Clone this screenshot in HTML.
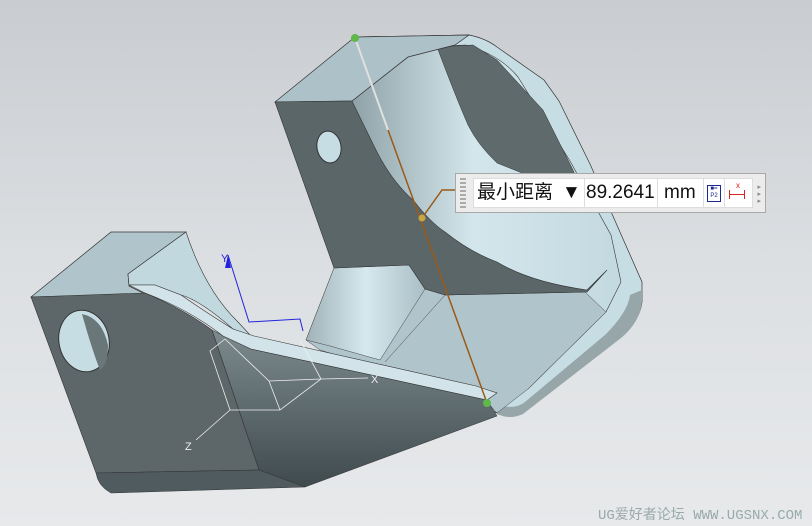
<!DOCTYPE html>
<html><head><meta charset="utf-8"><style>
html,body{margin:0;padding:0;width:812px;height:526px;overflow:hidden;background:linear-gradient(#c9ccd0,#dcdfe2 50%,#e7e9eb);font-family:"Liberation Sans","Noto Sans CJK SC",sans-serif}
svg{position:absolute;left:0;top:0}
#lab{position:absolute;left:455px;top:173px;width:311px;height:40px;background:#ececec;border:1px solid #a8a8a8;box-sizing:border-box}
#lab .in{position:absolute;left:17px;top:4px;width:280px;height:30px;background:#fff;border:1px solid #ddd;box-sizing:border-box;font-size:19px;line-height:28px;color:#111}
#lab .dots{position:absolute;left:4px;top:4px;width:6px;height:30px;background:repeating-linear-gradient(#aaa 0 2px,transparent 2px 4px)}
.wm{position:absolute;left:598px;top:504px;font-size:14px;color:#9aa;font-family:"Liberation Mono","Noto Sans CJK SC",monospace}
</style></head><body>
<svg width="812" height="526" viewBox="0 0 812 526">
<defs>
<linearGradient id="bowl" x1="0" y1="0" x2="1" y2="0"><stop offset="0" stop-color="#8fa2a8"/><stop offset=".45" stop-color="#d3e6ec"/><stop offset="1" stop-color="#c3d9e0"/></linearGradient>
<linearGradient id="bot" x1="0" y1="0" x2="0" y2="1"><stop offset="0" stop-color="#7d8b8e"/><stop offset="1" stop-color="#3f4a4d"/></linearGradient>
<linearGradient id="cyl" x1="0" y1="0" x2="1" y2="0"><stop offset="0" stop-color="#9fb2b8"/><stop offset=".5" stop-color="#d6e9ef"/><stop offset="1" stop-color="#a9bec5"/></linearGradient>
</defs>
<path d="M355,37 L469,35 Q485,38 497,47 L544,80 L559,101 L590,164 L642,282 L642,302 Q640,320 621,336 L523,413 Q510,418 497,413 L470,400 Z" fill="#c7dde4" stroke="#333" stroke-width=".7"/>
<path d="M642,290 L642,302 Q640,322 621,338 L523,414 Q510,420 497,414 L500,405 Q515,410 525,402 L605,335 Q628,312 630,295 Z" fill="#96a6a9"/>
<path d="M352,101 L408,57 L414,47 L466,45 Q500,55 518,77 L570,161 L611,235 L621,282 L606,312 L528,389 L487,400 L420,300 Z" fill="url(#bowl)" stroke="#333" stroke-width=".6"/>
<path d="M437,47 L473,45 L497,60 L543,110 L573,170 L580,187 L527,175 L497,163 Q478,145 468,125 Q455,95 437,47Z" fill="#5e6a6c" stroke="#333" stroke-width=".5"/>
<path d="M334,268 L409,265 L425,289 L445,295 L585,292 L606,312 L528,389 L497,413 L487,402 L320,350 L306,340 Z" fill="#b0c4cb" stroke="#444" stroke-width=".5"/>
<path d="M334,268 L409,265 L425,289 L380,360 L330,346 L306,340 Z" fill="url(#cyl)" stroke="#444" stroke-width=".5"/>
<line x1="445" y1="295" x2="385" y2="362" stroke="#444" stroke-width=".5"/>
<path d="M275,102 L355,37 L469,35 L455,45 L408,57 L352,101 Z" fill="#adc1c8" stroke="#333" stroke-width=".7"/>
<path d="M275,102 L352,101 L373,144 Q390,180 414,201 Q430,222 445,232 Q470,252 497,262 Q530,282 587,290 L607,270 L587,292 L445,295 L425,289 L409,265 L334,268 Z" fill="#5b6668" stroke="#333" stroke-width=".6"/>
<ellipse cx="329" cy="147" rx="12" ry="16" transform="rotate(-10 329 147)" fill="#c7dde4" stroke="#333"/>
<path d="M212,330 L251,349 L487,400 L497,416 L305,487 L259,470 Z" fill="url(#bot)" stroke="#333" stroke-width=".5"/>
<path d="M31,297 L111,232 L186,232 L128,274 L129,286 L145,294 Z" fill="#b0c4cb" stroke="#333" stroke-width=".7"/>
<path d="M186,232 Q205,290 238,322 L251,336 L233,329 Q200,300 181,295 L155,285 L129,285 L128,274 Z" fill="#c2d8df" stroke="#333" stroke-width=".6"/>
<path d="M129,285 L155,285 L181,295 Q210,315 233,329 L254,336 L476,386 L497,393 L487,400 L251,349 L223,336 Q190,310 145,293 Z" fill="#d2e4ea" stroke="#333" stroke-width=".6"/>
<path d="M31,297 L145,293 Q185,310 212,330 L259,470 L96,473 Z" fill="#5d6769" stroke="#333" stroke-width=".6"/>
<path d="M96,473 L259,470 L305,487 L111,493 Q98,486 96,473Z" fill="#4f5b5e" stroke="#333" stroke-width=".5"/>
<ellipse cx="84" cy="341" rx="25" ry="31" transform="rotate(-12 84 341)" fill="#c7dde4" stroke="#333"/>
<path d="M82,314 Q102,318 108,345 Q108,365 100,370 Q92,350 82,314Z" fill="#6a7779"/>
<line x1="355" y1="38" x2="388" y2="130" stroke="#e0e0e0" stroke-width="2"/>
<line x1="388" y1="130" x2="487" y2="403" stroke="#9a5a18" stroke-width="1.5"/>
<polyline points="422,218 442,190 455,190" fill="none" stroke="#9a5a18" stroke-width="1.5"/>
<circle cx="422" cy="218" r="3.5" fill="#c8a640"/>
<circle cx="355" cy="38" r="4" fill="#5fb84a"/>
<circle cx="487" cy="403" r="4" fill="#5fb84a"/>
<g stroke="#eee" stroke-width=".8" fill="none">
<path d="M225,339 L269,381 L321,379 L300,340 M225,339 L210,351 L230,410 L280,410 L321,379 M269,381 L280,410 M230,410 L196,440 M321,379 L368,378"/>
</g>
<g stroke="#22d" stroke-width="1" fill="none"><path d="M228,255 L249,322 L300,319 L303,331"/></g>
<path d="M228,255 L225,268 L231,268Z" fill="#22d"/>
<text x="221" y="262" fill="#22d" font-size="11">Y</text>
<text x="371" y="383" fill="#eee" font-size="11">X</text>
<text x="185" y="450" fill="#eee" font-size="11">Z</text>
</svg>
<div id="lab"><div class="dots"></div><div class="in">
<span style="position:absolute;left:3px">最小距离</span>
<span style="position:absolute;left:88px">▼</span>
<span style="position:absolute;left:110px;top:0;width:1px;height:28px;background:#ddd"></span>
<span style="position:absolute;left:112px">89.2641</span>
<span style="position:absolute;left:183px;top:0;width:1px;height:28px;background:#ddd"></span>
<span style="position:absolute;left:190px">mm</span>
<span style="position:absolute;left:229px;top:0;width:1px;height:28px;background:#ddd"></span>
<span style="position:absolute;left:233px;top:6px;width:12px;height:15px;border:1px solid #1a2a90;background:#fff;font-size:6px;line-height:7px;color:#1a2a90;text-align:center">■=<br>P2</span>
<span style="position:absolute;left:250px;top:0;width:1px;height:28px;background:#ddd"></span>
<span style="position:absolute;left:255px;top:15px;width:16px;height:1px;background:#d22"></span>
<span style="position:absolute;left:255px;top:11px;width:1px;height:9px;background:#d22"></span>
<span style="position:absolute;left:270px;top:11px;width:1px;height:9px;background:#d22"></span>
<span style="position:absolute;left:262px;top:3px;font-size:8px;line-height:8px;color:#d22">x</span>
</div>
<div style="position:absolute;right:4px;top:10px;font-size:7px;line-height:7px;color:#888">▸<br>▸<br>▸</div>
</div>
<div class="wm">UG爱好者论坛 WWW.UGSNX.COM</div>
</body></html>
